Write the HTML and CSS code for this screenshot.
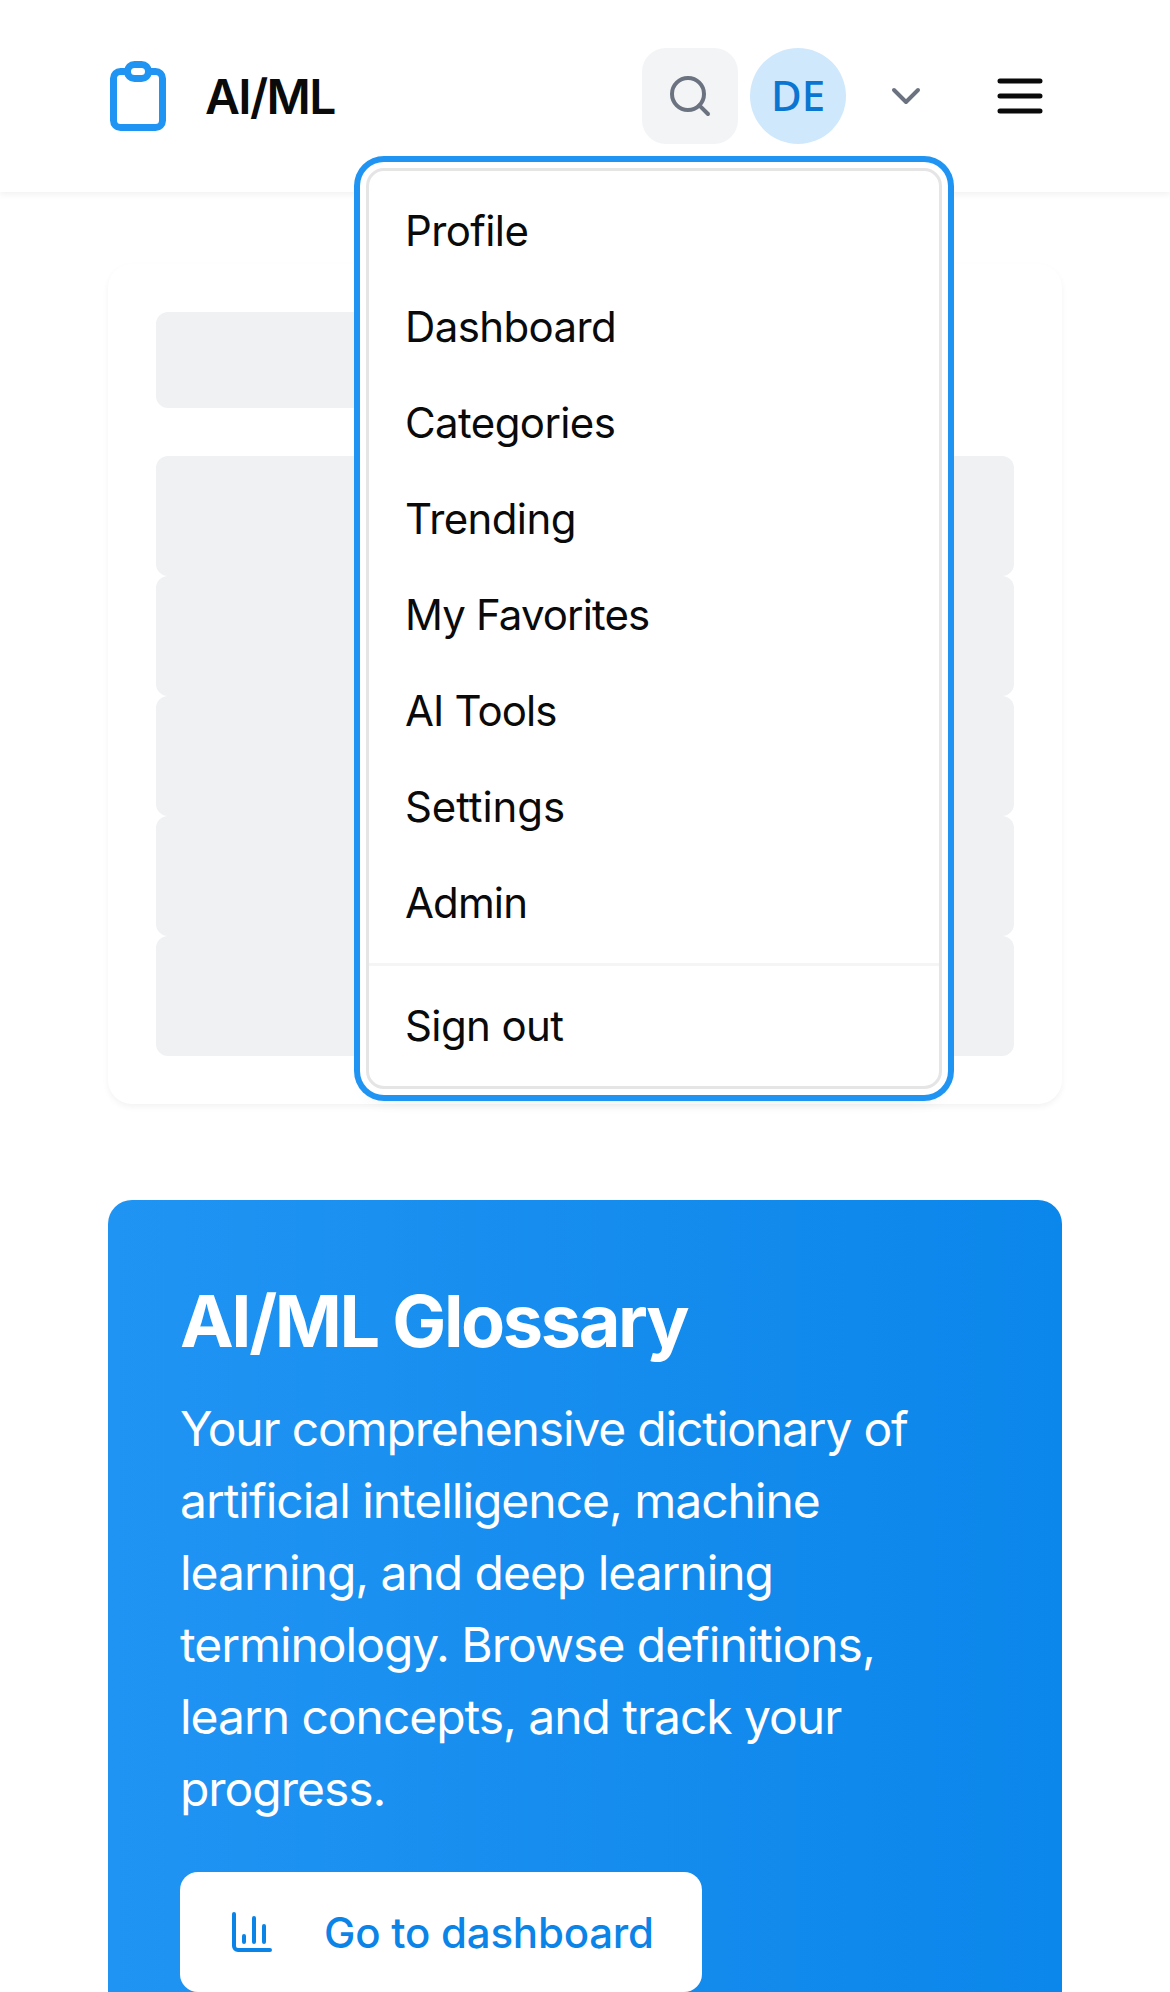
FILE: index.html
```html
<!DOCTYPE html>
<html lang="en">
<head>
<meta charset="utf-8">
<title>AI/ML Glossary</title>
<link rel="stylesheet" href="styles.css">
</head>
<body>
<header class="header">
  <a class="brand">
    <svg class="brand-icon" viewBox="0 0 24 24"><path d="M9 5H7a2 2 0 00-2 2v12a2 2 0 002 2h10a2 2 0 002-2V7a2 2 0 00-2-2h-2M9 5a2 2 0 002 2h2a2 2 0 002-2M9 5a2 2 0 012-2h2a2 2 0 012 2"/></svg>
    <span class="brand-name">AI/ML</span>
  </a>
  <div class="actions">
    <button class="search" aria-label="Search"><svg class="icon" viewBox="0 0 24 24"><circle cx="11" cy="11" r="8"/><path d="m21 21-4.35-4.35"/></svg></button>
    <div class="account">
      <span class="avatar">DE</span>
      <svg class="icon" viewBox="0 0 24 24"><path d="m6 9 6 6 6-6"/></svg>
      <nav class="menu">
        <div class="menu-group">
          <a class="menu-item">Profile</a>
          <a class="menu-item">Dashboard</a>
          <a class="menu-item">Categories</a>
          <a class="menu-item">Trending</a>
          <a class="menu-item tight">My Favorites</a>
          <a class="menu-item tight">AI Tools</a>
          <a class="menu-item loose">Settings</a>
          <a class="menu-item tight">Admin</a>
        </div>
        <div class="menu-group">
          <a class="menu-item">Sign out</a>
        </div>
      </nav>
    </div>
    <button class="burger" aria-label="Menu"><svg viewBox="0 0 24 24"><path d="M4 6h16M4 12h16M4 18h16"/></svg></button>
  </div>
</header>
<main class="main">
  <section class="card">
    <div class="bone bone-title"></div>
    <div class="bone"></div>
    <div class="bone"></div>
    <div class="bone"></div>
    <div class="bone"></div>
    <div class="bone"></div>
  </section>
  <section class="hero">
    <h1 class="hero-title">AI/ML Glossary</h1>
    <p class="hero-text">Your comprehensive dictionary of artificial intelligence, machine learning, and deep learning terminology. Browse definitions, learn concepts, and track your progress.</p>
    <a class="hero-button">
      <svg class="icon" viewBox="0 0 24 24"><path d="M3 3v16a2 2 0 0 0 2 2h16M18 17V9M13 17V5M8 17v-3"/></svg>
      <span>Go to dashboard</span>
    </a>
  </section>
</main>
</body>
</html>
```
FILE: styles.css
```css
* { box-sizing: border-box; }

body {
  margin: 0;
  background: #fff;
  color: #0a0a0a;
  font-family: Inter, sans-serif;
  font-size: 42px;
}

svg {
  display: block;
  flex: none;
  fill: none;
  stroke: currentColor;
  stroke-width: 2;
  stroke-linecap: round;
  stroke-linejoin: round;
}

button {
  border: 0;
  padding: 0;
  background: none;
  color: inherit;
}

.icon { width: 48px; height: 48px; }

.header {
  position: relative;
  z-index: 1;
  display: flex;
  align-items: center;
  justify-content: space-between;
  height: 192px;
  padding: 0 120px 0 96px;
  background: #fff;
  box-shadow: 0 3px 6px rgba(0, 0, 0, .05);
}

.brand {
  display: flex;
  align-items: center;
  gap: 25px;
  font-size: 48px;
  font-weight: 600;
  letter-spacing: -1.6px;
}

.brand-name { padding-top: 1px; }

.brand-icon { width: 84px; height: 84px; color: #2094f3; }

.actions { display: flex; align-items: center; }

.search {
  display: grid;
  place-items: center;
  width: 96px;
  height: 96px;
  border-radius: 24px;
  background: #f3f4f6;
  color: #6b7280;
}

.account {
  position: relative;
  display: flex;
  align-items: center;
  gap: 36px;
  margin: 0 60px 0 12px;
  color: #6b7280;
}

.avatar {
  width: 96px;
  height: 96px;
  border-radius: 50%;
  background: #d0e8fc;
  color: #0a76d1;
  font-family: "Noto Sans", sans-serif;
  font-weight: 500;
  line-height: 94px;
  text-align: center;
}

.burger svg { width: 60px; height: 60px; }

.menu {
  position: absolute;
  top: 120px;
  right: -12px;
  width: 576px;
  border: 3px solid #e5e5e5;
  border-radius: 18px;
  background: #fff;
  color: #0a0a0a;
  box-shadow: 0 0 0 6px #fff, 0 0 0 12px #2094f3,
    0 12px 18px -3px rgba(0, 0, 0, .1), 0 6px 12px -6px rgba(0, 0, 0, .1);
}

.menu-group { padding: 12px 0; }

.menu-group + .menu-group { border-top: 3px solid #f5f5f5; }

.menu-item {
  display: block;
  padding: 0 36px;
  line-height: 96px;
  letter-spacing: -.6px;
}

.menu-item.tight { letter-spacing: -.88px; }
.menu-item.loose { letter-spacing: -.1px; }

.main {
  display: flex;
  flex-direction: column;
  gap: 96px;
  padding: 72px 108px 0;
}

.card {
  padding: 48px;
  border-radius: 24px;
  background: #fff;
  box-shadow: 0 3px 6px rgba(0, 0, 0, .05);
}

.bone {
  height: 120px;
  border-radius: 12px;
  background: #eff1f3;
}

.bone-title { width: 50%; height: 96px; margin-bottom: 48px; }

.hero {
  height: 792px;
  padding: 73px 72px 0;
  border-radius: 24px 24px 0 0;
  background: linear-gradient(to right, #2094f3, #0b86ea);
  color: #fff;
}

.hero-title {
  margin: 0 0 24px;
  font-size: 72px;
  font-weight: 700;
  line-height: 96px;
  letter-spacing: -2.4px;
}

.hero-text {
  margin: 0 0 47px;
  font-size: 48px;
  line-height: 72px;
  letter-spacing: -1.04px;
}

.hero-text::first-line { letter-spacing: -1.18px; }

.hero-button {
  display: inline-flex;
  align-items: center;
  gap: 48px;
  height: 120px;
  padding: 0 48px;
  border-radius: 18px;
  background: #fff;
  color: #0b84e8;
  font-weight: 500;
  letter-spacing: -.22px;
}
```
